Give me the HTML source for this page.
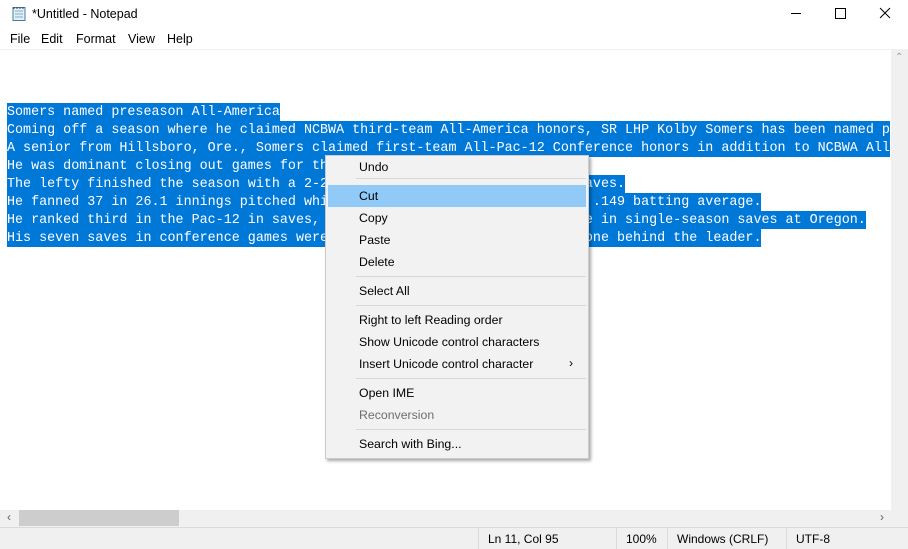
<!DOCTYPE html>
<html><head><style>
*{margin:0;padding:0;box-sizing:border-box}
body{width:908px;height:549px;overflow:hidden;background:#fff;font-family:"Liberation Sans",sans-serif;position:relative}
.abs{position:absolute}
.menu span{position:absolute;top:32px;font-size:12.5px;color:#000}
#text{position:absolute;left:7px;top:103px;font-family:"Liberation Mono",monospace;font-size:13.38px;line-height:18px;color:#fff}
#text div{height:18px;white-space:pre}
#text span{background:#0078d7;display:inline-block;height:18px;line-height:20px}
.cm{position:absolute;left:325px;top:155px;width:264px;height:304px;background:#f2f2f2;border:1px solid #ccc;box-shadow:2px 2px 3px rgba(0,0,0,.35)}
.cm div{position:absolute;left:33px;font-size:12.3px;color:#000}
.cm .sep{left:30px;width:230px;height:1px;background:#d7d7d7}
.sb{position:absolute;top:528px;height:21px;border-left:1px solid #dadada;font-size:12px;padding:4px 0 0 9px;color:#000}
</style></head><body>
<svg class="abs" style="left:11px;top:6px" width="16" height="16" viewBox="0 0 16 16"><rect x="2" y="1.5" width="12" height="13" fill="#dff0fb" stroke="#4a7aa0"/><path d="M4 5h8M4 8h8M4 11h8" stroke="#8ab" /><path d="M3 1v2M6 1v2M9 1v2M12 1v2" stroke="#345"/></svg>
<div class="abs" style="left:32px;top:7px;font-size:12.5px">*Untitled - Notepad</div>
<svg class="abs" style="left:788px;top:6px" width="112" height="16"><path d="M3 7.5h10" stroke="#000"/><rect x="47.5" y="2.5" width="10" height="10" fill="none" stroke="#000"/><path d="M92 2l10 10M102 2l-10 10" stroke="#000"/></svg>
<div class="menu"><span style="left:10px">File</span><span style="left:41px">Edit</span><span style="left:76px">Format</span><span style="left:128px">View</span><span style="left:167px">Help</span></div>
<div class="abs" style="left:0;top:49px;width:908px;height:1px;background:#f0f0f0"></div>
<div id="text"><div><span>Somers named preseason All-America</span></div><div><span>Coming off a season where he claimed NCBWA third-team All-America honors, SR LHP Kolby Somers has been named p</span></div><div><span>A senior from Hillsboro, Ore., Somers claimed first-team All-Pac-12 Conference honors in addition to NCBWA All</span></div><div><span>He was dominant closing out games for the Ducks this season, saves</span></div><div><span>The lefty finished the season with a 2-2 record, a 2.74 ERA, and seven saves.</span></div><div><span>He fanned 37 in 26.1 innings pitched while holding opposing hitters to a .149 batting average.</span></div><div><span>He ranked third in the Pac-12 in saves, and his seven saves tie 5th place in single-season saves at Oregon.</span></div><div><span>His seven saves in conference games were good for second in the Pac-12, one behind the leader.</span></div></div>
<div class="abs" style="left:891px;top:50px;width:17px;height:460px;background:#f0f0f0"></div>
<div class="abs" style="left:895px;top:52px;font-size:10px;color:#a0a0a0">&#8963;</div>
<div class="abs" style="left:0;top:510px;width:891px;height:17px;background:#f0f0f0"></div>
<div class="abs" style="left:19px;top:510px;width:160px;height:16px;background:#cdcdcd"></div>
<div class="abs" style="left:7px;top:510px;font-size:12px;color:#606060">&#8249;</div>
<div class="abs" style="left:880px;top:510px;font-size:12px;color:#606060">&#8250;</div>
<div class="abs" style="left:891px;top:510px;width:17px;height:17px;background:#f0f0f0"></div>
<div class="abs" style="left:0;top:527px;width:908px;height:22px;background:#f0f0f0;border-top:1px solid #dadada"></div>
<div class="sb" style="left:478px">Ln 11, Col 95</div>
<div class="sb" style="left:616px">100%</div>
<div class="sb" style="left:667px">Windows (CRLF)</div>
<div class="sb" style="left:786px">UTF-8</div>
<div class="cm">
<div style="top:4px">Undo</div>
<div class="sep" style="top:22px"></div>
<div style="left:2px;top:29px;width:258px;height:22px;background:#91c9f7"></div>
<div style="top:33px">Cut</div>
<div style="top:55px">Copy</div>
<div style="top:77px">Paste</div>
<div style="top:99px">Delete</div>
<div class="sep" style="top:120px"></div>
<div style="top:128px">Select All</div>
<div class="sep" style="top:149px"></div>
<div style="top:157px">Right to left Reading order</div>
<div style="top:179px">Show Unicode control characters</div>
<div style="top:201px">Insert Unicode control character</div>
<div style="top:200px;left:243px">&#8250;</div>
<div class="sep" style="top:222px"></div>
<div style="top:230px">Open IME</div>
<div style="top:252px;color:#6d6d6d">Reconversion</div>
<div class="sep" style="top:273px"></div>
<div style="top:281px">Search with Bing...</div>
</div>
</body></html>
